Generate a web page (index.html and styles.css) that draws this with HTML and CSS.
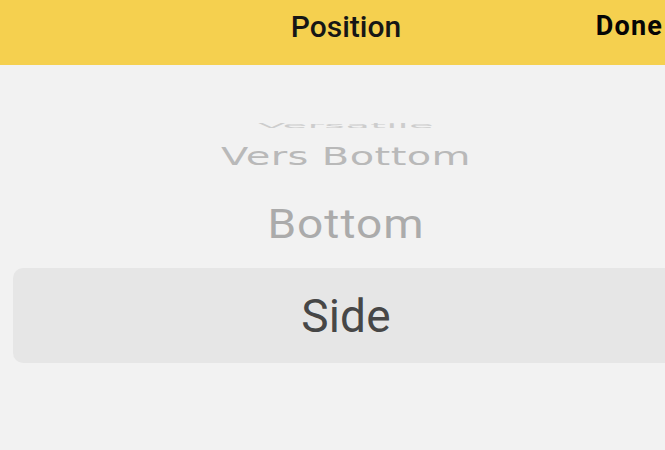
FILE: index.html
```html
<!DOCTYPE html>
<html lang="en">
<head>
<meta charset="utf-8">
<title>Position</title>
<link rel="stylesheet" href="styles.css">
</head>
<body>
<div class="screen">
  <header class="bar">
    <span class="spacer"></span>
    <h1 class="title">Position</h1>
    <button class="done">Done</button>
  </header>
  <div class="picker">
    <div class="item far"><span class="label">Versatile</span></div>
    <div class="item near"><span class="label">Vers Bottom</span></div>
    <div class="item prev"><span class="label">Bottom</span></div>
    <div class="item selected"><span class="label">Side</span></div>
  </div>
</div>
</body>
</html>
```
FILE: styles.css
```css
html, body {
  margin: 0;
  padding: 0;
  background: #f2f2f2;
  overflow: hidden;
}
.screen {
  width: 692px;
  height: 450px;
  font-family: Roboto, "Liberation Sans", sans-serif;
}
.bar {
  height: 65px;
  background: #f5d04f;
  display: grid;
  grid-template-columns: 1fr auto 1fr;
  align-items: start;
  padding-top: 12px;
  box-sizing: border-box;
}
.title {
  margin: 0;
  font-size: 30px;
  line-height: 30px;
  font-weight: 500;
  color: #161616;
}
.done {
  justify-self: end;
  margin: 1px 29px 0 0;
  padding: 0;
  border: 0;
  background: none;
  font-family: Roboto, "Liberation Sans", sans-serif;
  font-size: 27px;
  line-height: 27px;
  font-weight: 700;
  color: #050505;
  letter-spacing: 1.2px;
}
.picker {
  margin-top: 55px;
  display: flex;
  flex-direction: column;
}
.item {
  display: flex;
  align-items: center;
  justify-content: center;
  overflow: hidden;
}
.label {
  display: inline-block;
  white-space: nowrap;
}
.far {
  height: 12px;
}
.far .label {
  font-family: "DejaVu Sans", sans-serif;
  font-size: 40px;
  line-height: 40px;
  color: #cdcdcd;
  letter-spacing: 0.3px;
  transform: translateY(-1px) scaleY(0.18);
}
.near {
  height: 48px;
}
.near .label {
  font-family: "DejaVu Sans", sans-serif;
  font-size: 40px;
  line-height: 40px;
  color: #b9b9b9;
  letter-spacing: 0.4px;
  transform: scaleY(0.64);
}
.prev {
  height: 88px;
}
.prev .label {
  font-size: 46px;
  line-height: 46px;
  color: #ababab;
  letter-spacing: 1px;
  transform: scaleY(0.9);
}
.selected {
  height: 95px;
  margin: 0 13px;
  background: #e6e6e6;
  border-radius: 10px;
}
.selected .label {
  font-size: 46px;
  line-height: 46px;
  color: #474747;
  letter-spacing: 0.2px;
}
```
